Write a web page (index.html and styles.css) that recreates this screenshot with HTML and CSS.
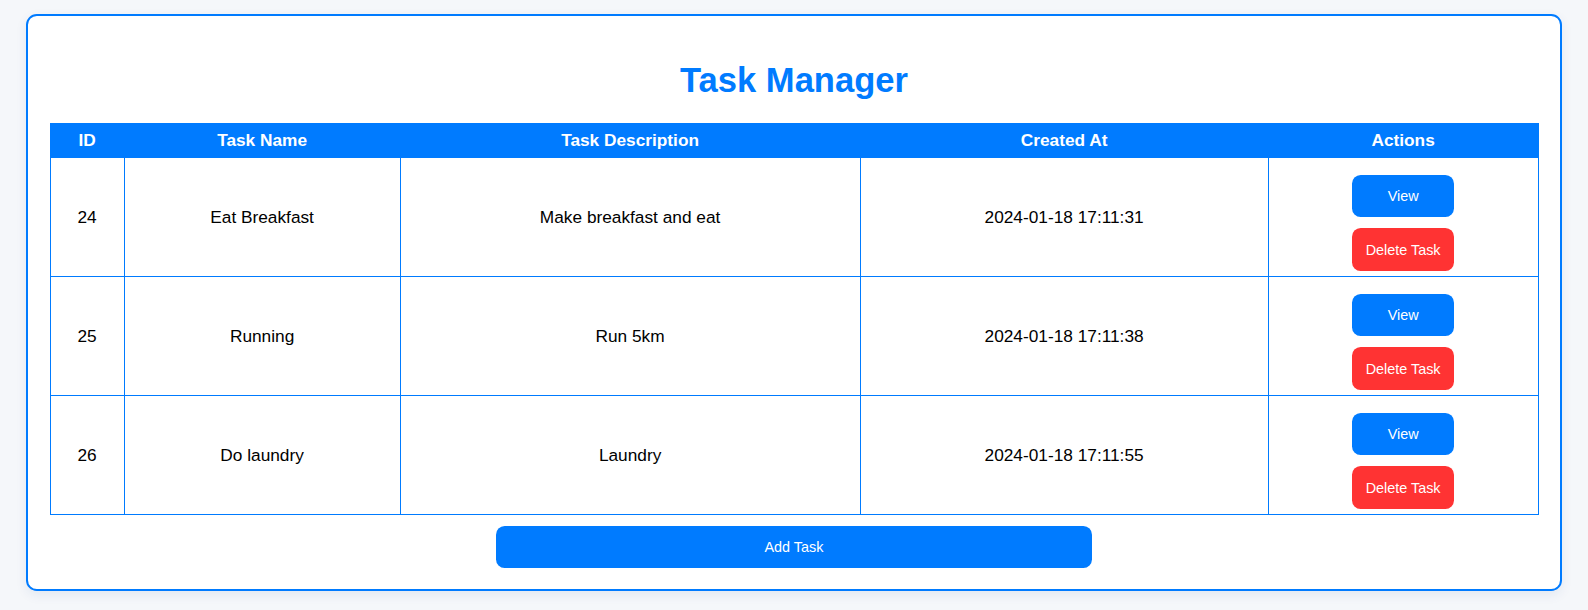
FILE: index.html
```html
<!DOCTYPE html>
<html lang="en">
<head>
<meta charset="utf-8">
<title>Task Manager</title>
<link rel="stylesheet" href="styles.css">
</head>
<body>
<div class="container">
  <h1 class="title">Task Manager</h1>
  <table class="tasks">
    <colgroup>
      <col class="col-id">
      <col class="col-name">
      <col class="col-desc">
      <col class="col-date">
      <col class="col-actions">
    </colgroup>
    <thead>
      <tr><th>ID</th><th>Task Name</th><th>Task Description</th><th>Created At</th><th>Actions</th></tr>
    </thead>
    <tbody>
      <tr>
        <td>24</td><td>Eat Breakfast</td><td>Make breakfast and eat</td><td>2024-01-18 17:11:31</td>
        <td class="actions"><div class="action-stack"><button class="btn btn-view">View</button><button class="btn btn-delete">Delete Task</button></div></td>
      </tr>
      <tr>
        <td>25</td><td>Running</td><td>Run 5km</td><td>2024-01-18 17:11:38</td>
        <td class="actions"><div class="action-stack"><button class="btn btn-view">View</button><button class="btn btn-delete">Delete Task</button></div></td>
      </tr>
      <tr>
        <td>26</td><td>Do laundry</td><td>Laundry</td><td>2024-01-18 17:11:55</td>
        <td class="actions"><div class="action-stack"><button class="btn btn-view">View</button><button class="btn btn-delete">Delete Task</button></div></td>
      </tr>
    </tbody>
  </table>
  <button class="btn btn-add">Add Task</button>
</div>
</body>
</html>
```

FILE: styles.css
```css
html, body {
  margin: 0;
  padding: 0;
}

body {
  background: #f5f7fa;
  font-family: "Liberation Sans", Arial, sans-serif;
  font-size: 17.28px;
  color: #000;
  padding: 14px 26px 20px;
}

.container {
  background: #fff;
  border: 2px solid #007bff;
  border-radius: 10.8px;
  padding: 21.6px;
  box-shadow: 0 4px 12px rgba(0, 60, 140, 0.08);
}

.title {
  margin: 23.2px 0 22.6px;
  text-align: center;
  color: #007bff;
  font-size: 34.56px;
  font-weight: bold;
  line-height: 39.7px;
}

.tasks {
  width: 100%;
  border-collapse: collapse;
  table-layout: fixed;
}

.col-id { width: 74px; }
.col-name { width: 276px; }
.col-desc { width: 460px; }
.col-date { width: 408px; }
.col-actions { width: 270px; }

.tasks th,
.tasks td {
  border: 1px solid #007bff;
  text-align: center;
  vertical-align: middle;
  padding: 0;
}

.tasks th {
  background: #007bff;
  color: #fff;
  font-weight: bold;
  height: 33px;
}

.tasks td.actions {
  padding: 17px 0 5px;
}

.action-stack {
  display: flex;
  flex-direction: column;
  align-items: center;
  gap: 11px;
}

.btn {
  border: none;
  color: #fff;
  font-family: "Liberation Sans", Arial, sans-serif;
  font-size: 14.4px;
  border-radius: 8.64px;
  cursor: pointer;
  padding: 0;
}

.btn-view {
  background: #007bff;
  width: 102px;
  height: 42px;
}

.btn-delete {
  background: #ff3333;
  width: 102px;
  height: 43px;
}

.btn-add {
  display: block;
  background: #007bff;
  width: 40%;
  height: 41.7px;
  margin: 10.8px auto 0;
}
```
